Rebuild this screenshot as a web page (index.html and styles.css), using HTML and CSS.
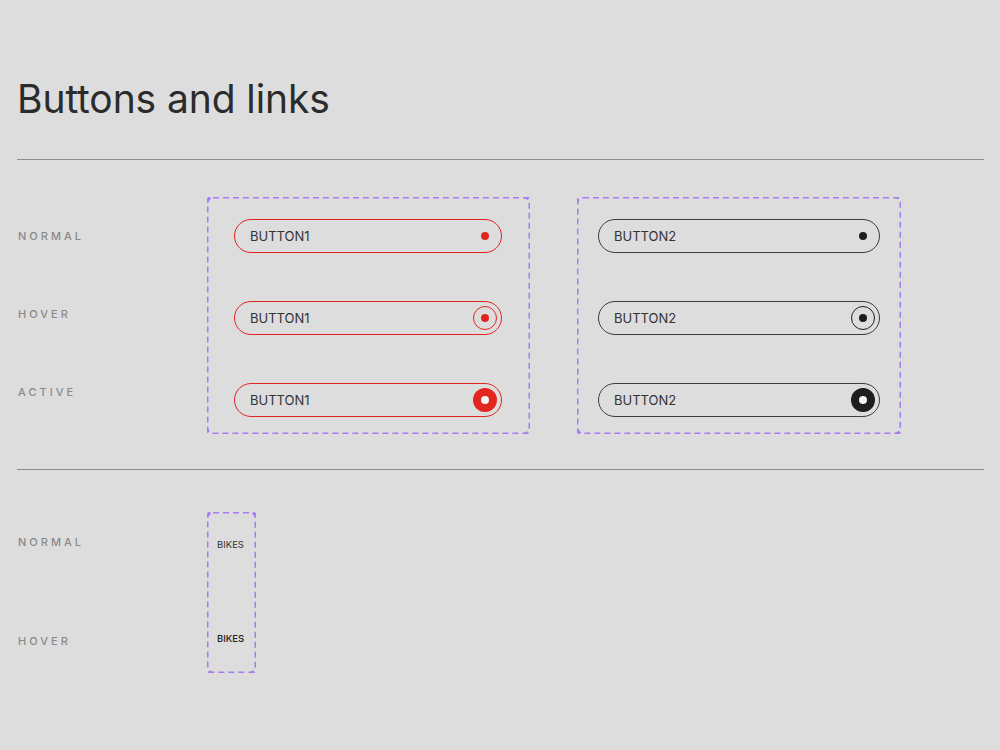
FILE: index.html
```html
<!DOCTYPE html>
<html lang="en">
<head>
  <meta charset="UTF-8" />
  <meta name="viewport" content="width=device-width, initial-scale=1.0"/>
  <title>Buttons and links</title>
  <link rel="stylesheet" href="styles.css">
</head>
<body>

  <header>
    <h1>Buttons and links</h1>
  </header>

  <hr class="rule">

  <section class="row row-buttons">
    <div class="labels">
      <span class="label">NORMAL</span>
      <span class="label">HOVER</span>
      <span class="label">ACTIVE</span>
    </div>

    <div class="frames">
      <div class="frame frame-red">
        <button class="pill pill-red">BUTTON1<span class="mark"><span class="dot"></span></span></button>
        <button class="pill pill-red hover">BUTTON1<span class="mark"><span class="dot"></span></span></button>
        <button class="pill pill-red active">BUTTON1<span class="mark"><span class="dot"></span></span></button>
      </div>

      <div class="frame frame-dark">
        <button class="pill pill-dark">BUTTON2<span class="mark"><span class="dot"></span></span></button>
        <button class="pill pill-dark hover">BUTTON2<span class="mark"><span class="dot"></span></span></button>
        <button class="pill pill-dark active">BUTTON2<span class="mark"><span class="dot"></span></span></button>
      </div>
    </div>
  </section>

  <hr class="rule">

  <section class="row row-links">
    <div class="labels">
      <span class="label">NORMAL</span>
      <span class="label">HOVER</span>
    </div>

    <div class="frame frame-links">
      <a class="link" href="#">BIKES</a>
      <a class="link hover" href="#">BIKES</a>
    </div>
  </section>

</body>
</html>
```

FILE: styles.css
```css
:root {
  --bg-color: #dddddd;
  --text-color: #2b2b2b;
  --label-color: #898989;
  --red: #e3251f;
  --dark: #1e1e1e;
}

body {
  margin: 0;
  padding: 0 16px 0 17px;
  font-family: 'Inter', 'Noto Sans', sans-serif;
  background-color: var(--bg-color);
  color: var(--text-color);
}

h1 {
  margin: 0;
  padding-top: 75px;
  margin-bottom: 36px;
  font-size: 39px;
  line-height: 48px;
  font-weight: 400;
  letter-spacing: -0.1px;
}

.rule {
  margin: 0;
  border: none;
  height: 1px;
  background-color: #8c8c8c;
}

.row {
  display: flex;
}

.row-buttons {
  padding: 37px 0 35px;
}

.row-links {
  padding-top: 42px;
}

.labels {
  box-sizing: border-box;
  width: 190px;
  display: flex;
  flex-direction: column;
  align-items: flex-start;
  padding-left: 1px;
}

.row-buttons .labels {
  padding-top: 32px;
  gap: 64px;
}

.row-links .labels {
  padding-top: 23px;
  gap: 85px;
}

.label {
  font-size: 11px;
  line-height: 14px;
  font-weight: 500;
  letter-spacing: 3px;
  color: var(--label-color);
}

.frames {
  display: flex;
  gap: 47px;
}

/* dashed purple frame, drawn as svg so the dash length matches */
.frame {
  box-sizing: border-box;
  display: flex;
  flex-direction: column;
  background-image: url("data:image/svg+xml,%3Csvg xmlns='http://www.w3.org/2000/svg' width='100%25' height='100%25'%3E%3Crect width='100%25' height='100%25' rx='6' ry='6' fill='none' stroke='%23a57cf2' stroke-width='3' stroke-dasharray='6 4'/%3E%3C/svg%3E");
}

.frame-red {
  width: 323px;
  height: 237px;
  padding: 22px 28px 17px 27px;
  gap: 48px;
}

.frame-dark {
  width: 324px;
  height: 237px;
  padding: 22px 21px 17px 21px;
  gap: 48px;
}

.frame-links {
  width: 49px;
  height: 161px;
  padding: 27px 0 0 10px;
  gap: 82px;
}

.pill {
  box-sizing: border-box;
  width: 100%;
  height: 34px;
  margin: 0;
  padding: 0 4px 0 15px;
  display: flex;
  align-items: center;
  justify-content: space-between;
  border-radius: 17px;
  background: transparent;
  font-family: inherit;
  font-size: 13px;
  color: #333333;
  cursor: pointer;
}

.pill-red {
  border: 1px solid var(--red);
  --tone: var(--red);
}

.pill-dark {
  border: 1px solid #3c3c3c;
  --tone: var(--dark);
}

.mark {
  box-sizing: border-box;
  width: 24px;
  height: 24px;
  border-radius: 50%;
  display: flex;
  align-items: center;
  justify-content: center;
}

.dot {
  width: 8px;
  height: 8px;
  border-radius: 50%;
  background-color: var(--tone);
}

.pill.hover .mark {
  border: 1px solid var(--tone);
}

.pill.active .mark {
  background-color: var(--tone);
}

.pill.active .dot {
  background-color: #f4f4f4;
}

.link {
  font-size: 9.5px;
  line-height: 12px;
  color: #333333;
  text-decoration: none;
}

.link.hover {
  font-weight: 500;
  color: #222222;
}
```
